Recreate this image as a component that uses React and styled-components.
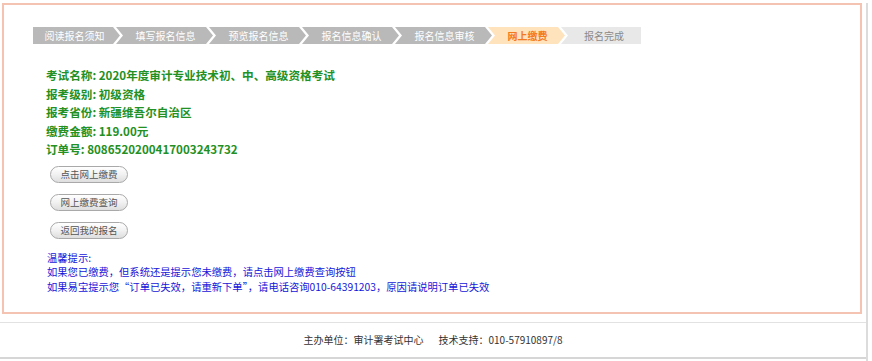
import React from 'react';
import styled, { createGlobalStyle, css } from 'styled-components';

const GlobalStyle = createGlobalStyle`
  body {
    margin: 0;
    background: #fff;
    font-family: "Noto Sans CJK SC", "Noto Sans", sans-serif;
  }
`;

const Page = styled.div`
  width: 866px;
  min-height: 361px;
  border-right: 2px solid #dcdcdc;
`;

const Panel = styled.div`
  box-sizing: border-box;
  width: 860px;
  margin: 3px 0 0 2px;
  border: 2px solid #f4c3b1;
  padding: 22px 0 18px 29px;
`;

// 步骤条
const Steps = styled.div`
  display: flex;
  height: 17px;
`;

const shapes = {
  first: 'polygon(0 0, calc(100% - 7px) 0, 100% 50%, calc(100% - 7px) 100%, 0 100%)',
  middle: 'polygon(0 0, calc(100% - 7px) 0, 100% 50%, calc(100% - 7px) 100%, 0 100%, 7px 50%)',
  last: 'polygon(0 0, 100% 0, 100% 100%, 0 100%, 7px 50%)',
};

const Step = styled.div`
  width: ${(p) => p.$w}px;
  margin-left: ${(p) => (p.$shape === 'first' ? 0 : -4)}px;
  padding-left: ${(p) => (p.$shape === 'first' ? 0 : 6)}px;
  padding-right: ${(p) => (p.$shape === 'last' ? 0 : 4)}px;
  box-sizing: border-box;
  display: flex;
  align-items: center;
  justify-content: center;
  clip-path: ${(p) => shapes[p.$shape]};
  font-size: 10px;
  line-height: 17px;
  white-space: nowrap;
  background: #b9b9b9;
  color: #fff;

  ${(p) =>
    p.$state === 'active' &&
    css`
      background: #fee3bd;
      color: #f47a20;
      font-weight: bold;
    `}
  ${(p) =>
    p.$state === 'todo' &&
    css`
      background: #e8e8e8;
      color: #8a8a8a;
    `}
`;

const Content = styled.div`
  margin-left: 13px;
`;

const Info = styled.div`
  margin-top: 22px;
  color: #239023;
  font-size: 11.6px;
  font-weight: bold;
  line-height: 18.5px;
`;

const Buttons = styled.div`
  display: flex;
  flex-direction: column;
  gap: 11px;
  margin: 7px 0 0 4px;
`;

const Button = styled.button`
  width: 78px;
  height: 17px;
  box-sizing: border-box;
  padding: 0;
  border: 1px solid #a9a9a9;
  border-radius: 9px;
  background: linear-gradient(#ffffff, #f1f1f1 50%, #dedede);
  color: #555;
  font-family: inherit;
  font-size: 9.5px;
  line-height: 15px;
  cursor: pointer;
`;

const Tips = styled.div`
  margin: 12px 0 0 1px;
  color: #1616d8;
  font-size: 10.3px;
  line-height: 14.5px;
`;

const Footer = styled.div`
  margin-top: 8px;
  height: 34px;
  line-height: 34px;
  border-top: 1px solid #e2e2e2;
  border-bottom: 2px solid #d6d6d6;
  text-align: center;
  font-size: 10px;
  color: #333;

  span + span {
    margin-left: 15px;
  }
`;

const steps = [
  { label: '阅读报名须知', w: 87, shape: 'first', state: 'done' },
  { label: '填写报名信息', w: 97, shape: 'middle', state: 'done' },
  { label: '预览报名信息', w: 97, shape: 'middle', state: 'done' },
  { label: '报名信息确认', w: 97, shape: 'middle', state: 'done' },
  { label: '报名信息审核', w: 97, shape: 'middle', state: 'done' },
  { label: '网上缴费', w: 77, shape: 'middle', state: 'active' },
  { label: '报名完成', w: 80, shape: 'last', state: 'todo' },
];

const App = () => {
  return (
    <>
      <GlobalStyle />
      <Page>
        <Panel>
          <Steps>
            {steps.map((s) => (
              <Step key={s.label} $w={s.w} $shape={s.shape} $state={s.state}>
                {s.label}
              </Step>
            ))}
          </Steps>
          <Content>
            <Info>
              <div>考试名称: 2020年度审计专业技术初、中、高级资格考试</div>
              <div>报考级别: 初级资格</div>
              <div>报考省份: 新疆维吾尔自治区</div>
              <div>缴费金额: 119.00元</div>
              <div>订单号: 8086520200417003243732</div>
            </Info>
            <Buttons>
              <Button type="button">点击网上缴费</Button>
              <Button type="button">网上缴费查询</Button>
              <Button type="button">返回我的报名</Button>
            </Buttons>
            <Tips>
              <div>温馨提示:</div>
              <div>如果您已缴费，但系统还是提示您未缴费，请点击网上缴费查询按钮</div>
              <div>如果易宝提示您“订单已失效，请重新下单”，请电话咨询010-64391203，原因请说明订单已失效</div>
            </Tips>
          </Content>
        </Panel>
        <Footer>
          <span>主办单位：审计署考试中心</span>
          <span>技术支持：010-57910897/8</span>
        </Footer>
      </Page>
    </>
  );
};

export default App;
